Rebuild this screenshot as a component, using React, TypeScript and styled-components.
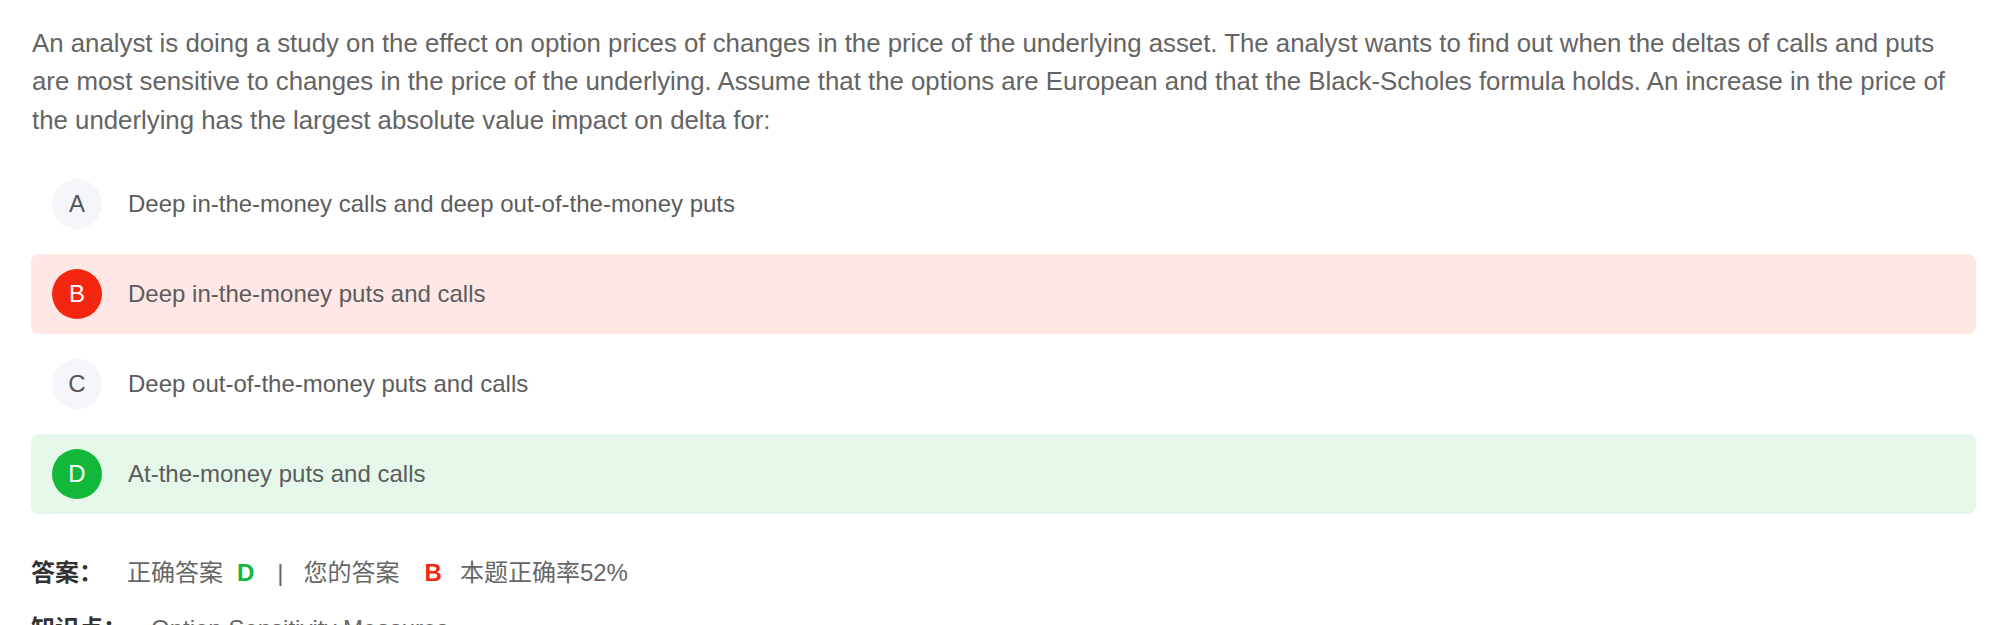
import React from "react";
import styled, { createGlobalStyle } from "styled-components";

const GlobalStyle = createGlobalStyle`
  html, body {
    margin: 0;
    padding: 0;
    background: #ffffff;
  }
  body {
    font-family: "Liberation Sans", "Noto Sans CJK SC", sans-serif;
  }
`;

type Status = "idle" | "wrong" | "right";

const options: { key: string; text: string; status: Status }[] = [
  { key: "A", text: "Deep in-the-money calls and deep out-of-the-money puts", status: "idle" },
  { key: "B", text: "Deep in-the-money puts and calls", status: "wrong" },
  { key: "C", text: "Deep out-of-the-money puts and calls", status: "idle" },
  { key: "D", text: "At-the-money puts and calls", status: "right" },
];

const rowBg: Record<Status, string> = {
  idle: "transparent",
  wrong: "#ffe7e6",
  right: "#e5f8e9",
};

const badgeBg: Record<Status, string> = {
  idle: "#f4f6f9",
  wrong: "#f5260f",
  right: "#12b83a",
};

function Question() {
  return (
    <Page>
      <Stem>
        An analyst is doing a study on the effect on option prices of changes in the price of the
        underlying asset. The analyst wants to find out when the deltas of calls and puts are most
        sensitive to changes in the price of the underlying. Assume that the options are European
        and that the Black-Scholes formula holds. An increase in the price of the underlying has the
        largest absolute value impact on delta for:
      </Stem>

      <OptionList>
        {options.map((item) => (
          <OptionRow key={item.key} $status={item.status}>
            <Badge $status={item.status}>{item.key}</Badge>
            <OptionText>{item.text}</OptionText>
          </OptionRow>
        ))}
      </OptionList>

      <Summary>
        <InfoLine>
          <InfoLabel>答案：</InfoLabel>
          <InfoText>正确答案</InfoText>
          <Letter $color="#12b83a">D</Letter>
          <Divider>|</Divider>
          <InfoText>您的答案</InfoText>
          <Letter $color="#f5260f" $gap={25}>B</Letter>
          <InfoText>本题正确率52%</InfoText>
        </InfoLine>

        <InfoLine>
          <InfoLabel>知识点：</InfoLabel>
          <InfoText>Option Sensitivity Measures</InfoText>
        </InfoLine>
      </Summary>
    </Page>
  );
}

export default function App() {
  return (
    <>
      <GlobalStyle />
      <Question />
    </>
  );
}

const Page = styled.div`
  padding: 24px 24px 0 31px;
  box-sizing: border-box;
  width: 2000px;
  color: #666666;
`;

const Stem = styled.p`
  margin: 0 0 0 1px;
  font-size: 25.8px;
  line-height: 38.4px;
  color: #646464;
`;

const OptionList = styled.div`
  margin-top: 25px;
  display: flex;
  flex-direction: column;
  gap: 10px;
`;

const OptionRow = styled.div<{ $status: Status }>`
  display: flex;
  align-items: center;
  gap: 26px;
  height: 80px;
  padding-left: 21px;
  border-radius: 8px;
  background: ${(props) => rowBg[props.$status]};
`;

const Badge = styled.div<{ $status: Status }>`
  width: 50px;
  height: 50px;
  border-radius: 50%;
  flex-shrink: 0;
  display: flex;
  align-items: center;
  justify-content: center;
  font-size: 24px;
  background: ${(props) => badgeBg[props.$status]};
  color: ${(props) => (props.$status === "idle" ? "#555555" : "#ffffff")};
`;

const OptionText = styled.span`
  font-size: 24px;
  color: #5c5c5c;
`;

const Summary = styled.div`
  margin-top: 41px;
  display: flex;
  flex-direction: column;
  gap: 20px;
`;

const InfoLine = styled.div`
  display: flex;
  align-items: center;
  height: 36px;
  font-size: 24px;
  line-height: 36px;
`;

const InfoLabel = styled.span`
  font-weight: bold;
  color: #333333;
  margin-right: 24px;
`;

const InfoText = styled.span`
  color: #666666;
`;

const Letter = styled.span<{ $color: string; $gap?: number }>`
  font-weight: bold;
  color: ${(props) => props.$color};
  margin: 0 18px 0 ${(props) => props.$gap ?? 14}px;
`;

const Divider = styled.span`
  color: #666666;
  margin: 0 20px 0 5px;
`;
